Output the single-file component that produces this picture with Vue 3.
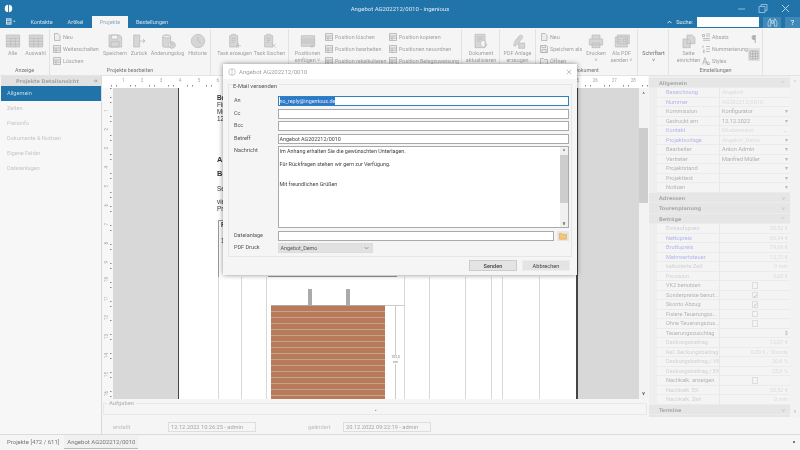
<template>
  <div class="app">
    <header class="titlebar">
      <svg class="logo" viewBox="0 0 12 12"><circle cx="6" cy="6" r="5" fill="#fff" /><path d="M6 0v12" stroke="#2174a9" stroke-width="1.2" /></svg>
      <span class="wintitle">Angebot AG202212/0010 - ingenious</span>
      <svg class="winbtn" viewBox="0 0 54 9"><path d="M0 5h7" stroke="#8fbad6" fill="none" /><path d="M21 2.500h6v6h-6zM23 2.500v-2h6v6h-2" stroke="#8fbad6" fill="none" /><path d="M44 1l7 7M51 1l-7 7" stroke="#b8d3e5" fill="none" /></svg>
    </header>
    <nav class="tabs">
      <svg class="menuicon" viewBox="0 0 14 8"><path d="M0 0h7v8H0z" fill="#dbe7f0" /><path d="M1 2h5M1 4h5M1 6h5" stroke="#2174a9" /><path d="M9 3h3l-1.500 2z" fill="#dbe7f0" /></svg>
      <span class="tab" style="width:35px;margin-left:7px">Kontakte</span>
      <span class="tab" style="width:33px">Artikel</span>
      <span class="tab active">Projekte</span>
      <span class="tab" style="width:48px">Bestellungen</span>
      <span class="spacer"></span>
      <svg class="chev" viewBox="0 0 6 4"><path d="M.5 3.500L3 1l2.500 2.500" fill="none" stroke="#fff" /></svg>
      <span class="search-label">Suche:</span>
      <span class="search"></span>
      <span class="helpbtn binoc">
        <svg viewBox="0 0 12 10"><path d="M1 9V5l2-4h1v8zM11 9V5L9 1H8v8zM5 3h2v3H5z" fill="none" stroke="#fff" stroke-width=".6" /></svg>
      </span>
      <span class="helpbtn last">?</span>
    </nav>

    <section class="ribbon">
      <div v-for="g in groups" :key="g.x" class="rgroup" :style="{ width: g.w + 'px' }">
        <div class="rbody" :style="{ paddingLeft: g.pad + 'px' }">
          <template v-for="(it, i) in g.items" :key="i">
            <div v-if="it.list" class="rlist" :style="{ width: it.w + 'px', marginLeft: (it.ml || 0) + 'px' }">
              <div v-for="s in it.list" :key="s" class="rsmall">
                <svg viewBox="0 0 8 8" class="sicon"><path :d="smallIcons[s] || smallIcons.list" fill="#ececec" stroke="#a9a9a9" stroke-width=".7" /></svg>
                <span>{{ s }}</span>
              </div>
            </div>
            <div v-else-if="it.extras" class="rextras">
              <span class="pilcrow">¶</span>
              <span class="gridbtn">
                <svg viewBox="0 0 10 10"><path d="M1 1h8v8H1zM1 3.700h8M1 6.300h8M3.700 1v8M6.300 1v8" fill="none" stroke="#a5a5a5" stroke-width=".7" /></svg>
              </span>
            </div>
            <div v-else class="rbig" :class="{ dark: it.dark }" :style="{ width: it.w + 'px' }">
              <svg viewBox="0 0 24 24" class="bicon"><path :d="icons[it.icon]" fill="#d6d6d6" stroke="#b8b8b8" stroke-width="1" /></svg>
              <span class="rtext">{{ it.t }}</span>
              <span v-if="it.t2" class="rtext">{{ it.t2 }}</span>
            </div>
          </template>
        </div>
        <div class="rlabel">{{ g.label }}</div>
      </div>
    </section>

    <main class="main">
      <aside class="side">
        <div class="side-head"><span>Projekte Detailansicht</span><em>«</em></div>
        <div class="side-item current">Allgemein</div>
        <div v-for="s in sideItems" :key="s" class="side-item">{{ s }}</div>
      </aside>

      <section class="center">
        <div class="ruler-h">
          <span v-for="n in 28" :key="n" class="rh">{{ n }}</span>
        </div>
        <div class="docarea">
          <div class="ruler-v">
            <span v-for="n in 16" :key="n" class="rv"><span>{{ n }}</span></span>
          </div>
          <div class="gray-l"></div>
          <div class="page">
            <div class="pagetext" style="top:6px"><b>Beispiel GmbH</b><br />Firma<br />Musterstr. 1<br />12345 Stadt</div>
            <div class="pagetext" style="top:68px"><b class="big">Angebot</b></div>
            <div class="pagetext" style="top:82px"><b class="big">Betreff</b></div>
            <div class="pagetext" style="top:97px">Sehr geehrte</div>
            <div class="pagetext" style="top:110px">vielen Dank<br />Preise</div>
            <div class="ptable"><b>P</b><span>1</span></div>
            <i v-for="x in pageLines" :key="x" class="vline" :style="{ left: x - 179 + 'px' }"></i>
            <i class="rowline"></i>
            <i class="post" style="left:129px"></i>
            <i class="post" style="left:167px"></i>
            <i class="dimtop"></i>
            <i class="dim"></i>
            <div class="dimtext">102,0<br />cm</div>
            <div class="panelrect"></div>
          </div>
          <div class="gray-r"></div>
          <div class="vscroll"><b>^</b><i></i><b class="down">v</b></div>
        </div>
        <div class="aufgaben"><span class="auf-legend">Aufgaben</span><span class="auf-dot">▴</span></div>
        <div class="stamps">
          <span class="st-label">erstellt</span>
          <span class="st-box">12.12.2022 10:26:25 - admin</span>
          <span class="st-label second">geändert</span>
          <span class="st-box">20.12.2022 09:22:19 - admin</span>
        </div>
      </section>

      <aside class="props">
        <div class="grid">
          <div class="sect">Allgemein<em>^</em></div>
          <div v-for="r in propsA" :key="r[0]" class="prow">
            <span class="pl" :class="r[2]">{{ r[0] }}</span>
            <span class="pv" :class="r[3]"><span>{{ r[1] }}</span><span v-if="r[4]" class="arrow">{{ r[4] }}</span></span>
          </div>
          <div class="sect">Adressen<em>v</em></div>
          <div class="sect">Tourenplanung<em>v</em></div>
          <div class="sect">Beträge<em>^</em></div>
          <div v-for="r in propsB" :key="r[0]" class="prow">
            <span class="pl" :class="r[2]">{{ r[0] }}</span>
            <span class="pv right" :class="r[3]">
              <i v-if="r[1] === 'box'" class="cb"></i>
              <i v-else-if="r[1] === 'tick'" class="cb">✓</i>
              <template v-else>{{ r[1] }}</template>
            </span>
          </div>
          <div class="sect">Termine<em>v</em></div>
          <div class="sect">Wiederbeschaffung<em>v</em></div>
        </div>
        <div class="pscroll"><b>^</b><b>v</b></div>
      </aside>
    </main>

    <footer class="foot">
      <span class="ftab">Projekte [472 / 611]</span>
      <span class="ftab on">Angebot AG202212/0010</span>
      <span class="spacer"></span>
      <i class="dot"></i>
    </footer>

    <div class="dialog">
      <div class="dlg-title">
        <svg viewBox="0 0 12 12" class="dlg-logo"><circle cx="6" cy="6" r="5" fill="none" stroke="#b5b5b5" /><path d="M6 1v10" stroke="#b5b5b5" /></svg>
        <span>Angebot AG202212/0010</span>
        <svg viewBox="0 0 8 8" class="dlg-x"><path d="M1 1l6 6M7 1l-6 6" stroke="#aaa" fill="none" /></svg>
      </div>
      <div class="dlg-body">
        <div class="fs">
          <span class="legend">E-Mail versenden</span>
          <div class="form">
            <label>An</label>
            <div class="inp focus"><span class="sel">no_reply@ingentous.de</span></div>
            <label>Cc</label>
            <div class="inp"></div>
            <label>Bcc</label>
            <div class="inp"></div>
            <label>Betreff</label>
            <div class="inp">Angebot AG202212/0010</div>
            <label>Nachricht</label>
            <div class="inp msg">
              <div class="msgtext">
                Im Anhang erhalten Sie die gewünschten Unterlagen.<br /><br />
                Für Rückfragen stehen wir gern zur Verfügung.<br /><br /><br />
                Mit freundlichen Grüßen
              </div>
              <div class="msgscroll"><b>^</b><i></i><b class="down">v</b></div>
            </div>
            <label>Dateianlage</label>
            <div class="filerow">
              <div class="inp"></div>
              <span class="folder">
                <svg viewBox="0 0 10 9"><path d="M.5 1.500h3l1 1h5v6h-9z" fill="#f6c675" stroke="#d99a3c" stroke-width=".6" /></svg>
              </span>
            </div>
            <label>PDF Druck</label>
            <div class="combo"><span>Angebot_Demo</span><svg viewBox="0 0 8 5"><path d="M1 1l3 3 3-3" fill="none" stroke="#555" stroke-width=".8" /></svg></div>
          </div>
        </div>
        <div class="dlg-btns">
          <span class="btn main-btn">Senden</span>
          <span class="btn">Abbrechen</span>
        </div>
      </div>
    </div>
  </div>
</template>

<script setup>
const icons = {
  table: "M2 3h20v18H2zM2 8h20M2 12.500h20M2 17h20M8.500 8v13M15.500 8v13",
  save: "M3 3h16l3 3v15H3zM7 3v6h9V3zM6 13h12v8H6z",
  door: "M4 3h9v18H4zM13 12h8M18 9l3 3-3 3",
  db: "M4 5c0-3 12-3 12 0v15c0 2-12 2-12 0zM4 5c0 3 12 3 12 0M18 13a5 5 0 1 0 .01 0zM18 15v3h2",
  clock: "M12 2a10 10 0 1 0 .01 0zM12 6v6l5 4",
  taskadd: "M4 4h3V2h6v2h3v17H4zM7 8h6M7 11h6M7 14h4M17 15v7M14 19h7",
  taskdel: "M4 4h3V2h6v2h3v17H4zM7 8h6M7 11h6M7 14h4M15 16l6 6M21 16l-6 6",
  rows: "M2 4h20v16H2zM2 9h20M2 12h20M2 15h20M18 17v6M15 20h6",
  docref: "M3 2h15v20H3zM6 6h9M6 9h9M6 12h5M19 12a5 5 0 1 0 2 5",
  clip: "M6 14l8-10a3 3 0 0 1 5 3L9 19a2 2 0 0 1-3-3l8-9M13 15h9v8h-9z",
  print: "M6 9V3h12v6M2 9h20v9H2zM6 15h12v7H6z",
  mail: "M5 3h18v13H5zM2 6h18v15H2zM5 10h6M5 13h6M14 9h4v4h-4z",
  page: "M9 3h8l4 4v9H9zM3 9h8l3 3v10H3z",
  none: "",
};

const smallIcons = {
  list: "M.5.500h7v7h-7zM.5 3h7M.5 5.200h7M3 3v4.500",
  Neu: "M1.500.500h3.500l2 2v5h-5.500z",
  Öffnen: "M.5 1.500h3l1 1h3v5h-7z",
  "Speichern als": "M.5.500h6l1 1v6h-7zM2 .5v2h3.500v-2M2 4.500h4v3H2z",
  Absatz: "M.5 1.500h2v2h-2zM4 1h4M4 3h4M1 5.500h7M1 7.300h7",
  Nummerierung: "M1 .5v2.500M1 5h1.500L1 7.300h2M4 1.500h4M4 4h4M4 6.500h4",
  Styles: "M.5 7.500L3 .5l2.500 7M1.500 5h3M5 7.500a1.500 1.500 0 1 1 2.500 0z",
};

const posA = ["Position löschen", "Position bearbeiten", "Position rekalkulieren"];
const posB = ["Position kopieren", "Positionen neuordnen", "Position Belegzuweisung"];

const groups = [
  { x: 0, w: 50, pad: 1, label: "Anzeige", items: [{ icon: "table", t: "Alle", w: 23 }, { icon: "table", t: "Auswahl", w: 23 }] },
  {
    x: 50, w: 161, pad: 3, label: "Projekte bearbeiten",
    items: [
      { list: ["Neu", "Weiterschalten", "Löschen"], w: 49 },
      { icon: "save", t: "Speichern", w: 26 },
      { icon: "door", t: "Zurück", w: 22 },
      { icon: "db", t: "Änderungslog", w: 35 },
      { icon: "clock", t: "Historie", w: 25 },
    ],
  },
  { x: 211, w: 78, pad: 5, label: "", items: [{ icon: "taskadd", t: "Task erzeugen", w: 37 }, { icon: "taskdel", t: "Task löschen", w: 33 }] },
  {
    x: 289, w: 173, pad: 5, label: "",
    items: [{ icon: "rows", t: "Positionen", t2: "einfügen ˅", w: 27 }, { list: posA, w: 64, ml: 4 }, { list: posB, w: 70 }],
  },
  { x: 462, w: 38, pad: 1, label: "", items: [{ icon: "docref", t: "Dokument", t2: "aktualisieren", w: 36 }] },
  { x: 500, w: 36, pad: 0, label: "", items: [{ icon: "clip", t: "PDF Anlage", t2: "erzeugen", w: 35 }] },
  {
    x: 536, w: 102, pad: 4, label: "Dokument",
    items: [
      { list: ["Neu", "Speichern als", "Öffnen"], w: 43 },
      { icon: "print", t: "Drucken", t2: "˅", w: 26 },
      { icon: "mail", t: "Als PDF", t2: "senden ˅", w: 25 },
    ],
  },
  { x: 638, w: 31, pad: 1, label: "", items: [{ icon: "none", t: "Schriftart", t2: "˅", w: 29, dark: true }] },
  {
    x: 669, w: 94, pad: 6, label: "Einstellungen",
    items: [{ icon: "page", t: "Seite", t2: "einrichten", w: 27 }, { list: ["Absatz", "Nummerierung", "Styles"], w: 46 }, { extras: true }],
  },
];

const sideItems = ["Zeiten", "Preisinfo", "Dokumente & Notizen", "Eigene Felder", "Dateianlagen"];
const pageLines = [218, 241, 266, 404, 429, 465, 491, 502, 539];

const propsA = [
  ["Bezeichnung", "Angebot", "link", "faint"],
  ["Nummer", "AG202212/0010", "link", "faint"],
  ["Kommission", "Konfigurator", "", "", "▾"],
  ["Gedruckt am", "12.12.2022", "", "", "▾"],
  ["Kontakt", "Mustermann", "link", "faint", "..."],
  ["Projektvorlage", "Angebot_Demo", "link", "faint", "▾"],
  ["Bearbeiter", "Anton Admin", "", "", "▾"],
  ["Vertreter", "Manfred Müller", "", "", "▾"],
  ["Projektstand", "", "", "", "▾"],
  ["Projekttext", "", "", "", "▾"],
  ["Notizen", "", "", "", "▾"],
];

const propsB = [
  ["Einkaufspreis", "50,52 €", "pale", "faint"],
  ["Nettopreis", "66,94 €", "link", "faint"],
  ["Bruttopreis", "79,66 €", "link", "faint"],
  ["Mehrwertsteuer", "12,72 €", "link", "faint"],
  ["kalkulierte Zeit", "0 min", "pale", "faint"],
  ["Provision", "0,00 €", "pale", "faint"],
  ["VK2 benutzen", "box", "", "mid"],
  ["Sonderpreise benut...", "tick", "", "mid"],
  ["Skonto Abzug", "tick", "", "mid"],
  ["Fixiere Teuerungsz...", "box", "", "mid"],
  ["Ohne Teuerungszus...", "box", "", "mid"],
  ["Teuerungszuschlag", "$", "", ""],
  ["Deckungsbeitrag", "12,07 €", "pale", "faint"],
  ["Rel. Deckungsbeitrag", "0,00 € / Stunde", "pale", "faint"],
  ["Deckungsbeitrag / VK", "20,6 %", "pale", "faint"],
  ["Deckungsbeitrag / EK", "25,9 %", "pale", "faint"],
  ["Nachkalk. anzeigen", "box", "", "mid"],
  ["Nachkalk. EK", "50,52 €", "pale", "faint"],
  ["Nachkalk. Zeit", "0 min", "pale", "faint"],
];
</script>

<style scoped>
.app,
.app * {
  box-sizing: border-box;
}

.app {
  position: relative;
  display: flex;
  flex-direction: column;
  width: 800px;
  height: 450px;
  overflow: hidden;
  background: #f5f5f5;
  font-family: Roboto, "Liberation Sans", sans-serif;
  font-size: 5.400px;
  color: #888;
  filter: blur(0.3px);
}

.spacer {
  flex: 1;
}

.titlebar {
  display: flex;
  align-items: center;
  height: 14px;
  flex: none;
  padding: 2px 0 0 4px;
  background: #2174a9;
}

.logo {
  width: 9px;
  height: 9px;
  flex: none;
}

.wintitle {
  flex: 1;
  padding-left: 49px;
  text-align: center;
  color: #dfeaf2;
  font-size: 6px;
}

.winbtn {
  width: 54px;
  height: 9px;
  flex: none;
  margin-right: 8px;
}

.tabs {
  display: flex;
  align-items: flex-end;
  height: 14px;
  flex: none;
  background: #2174a9;
  color: #cfe0ec;
  font-size: 5.600px;
}

.menuicon {
  width: 11px;
  height: 7px;
  margin: 0 0 3px 6px;
}

.tab {
  height: 12px;
  line-height: 12px;
  text-align: center;
}

.tab.active {
  width: 36px;
  background: #f5f5f5;
  color: #8aa9bf;
}

.chev {
  width: 5px;
  height: 4px;
  margin: 0 4px 4px 0;
}

.search-label {
  height: 12px;
  line-height: 12px;
  color: #dfeaf2;
  margin-right: 4px;
}

.search {
  width: 62px;
  height: 10px;
  margin: 0 4px 1px 0;
  background: #fff;
}

.helpbtn {
  width: 18px;
  height: 11px;
  margin-right: 4px;
  text-align: center;
  line-height: 11px;
  font-size: 8px;
  color: #fff;
  background: #3f88b7;
}

.helpbtn.last {
  width: 15px;
  margin-right: 0;
}

.binoc svg {
  width: 11px;
  height: 9px;
  margin-top: 1px;
}

.ribbon {
  display: flex;
  height: 48px;
  flex: none;
  background: #f5f5f5;
  border-bottom: 1px solid #e4e4e4;
}

.rgroup {
  display: flex;
  flex-direction: column;
  flex: none;
  height: 46px;
  margin-top: 1px;
  border-right: 1px solid #e2e2e2;
}

.rbody {
  display: flex;
  flex: 1;
  padding-top: 4px;
}

.rlabel {
  height: 10px;
  line-height: 10px;
  text-align: center;
  color: #777;
}

.rbig {
  display: flex;
  flex-direction: column;
  align-items: center;
  flex: none;
  color: #a2a2a2;
}

.rbig.dark {
  color: #6f6f6f;
}

.bicon {
  width: 16px;
  height: 16px;
  margin-bottom: 1px;
}

.rtext {
  line-height: 6.800px;
  white-space: nowrap;
}

.rlist {
  display: flex;
  flex-direction: column;
  flex: none;
  gap: 4px;
  color: #a2a2a2;
}

.rsmall {
  display: flex;
  align-items: center;
  gap: 2px;
  height: 8px;
  white-space: nowrap;
}

.sicon {
  width: 8px;
  height: 8px;
  flex: none;
}

.rextras {
  display: flex;
  flex-direction: column;
  align-items: center;
  flex: none;
  width: 12px;
}

.pilcrow {
  height: 15px;
  font-size: 11px;
  line-height: 13px;
  color: #b2b2b2;
}

.gridbtn {
  width: 12px;
  height: 13px;
  padding: 1.500px 1px;
  background: #e1e1e1;
}

.gridbtn svg {
  display: block;
  width: 10px;
  height: 10px;
}

.main {
  display: flex;
  flex: none;
  height: 358px;
}

.side {
  width: 102px;
  flex: none;
  border-right: 1px solid #dadada;
  background: #f7f7f7;
  padding-left: 1px;
}

.side-head {
  display: flex;
  justify-content: space-between;
  height: 10px;
  line-height: 10px;
  padding: 0 3px 0 15px;
  background: #e1e1e1;
  font-family: "DejaVu Sans", sans-serif;
  font-weight: bold;
  font-size: 5px;
  color: #a4a4a4;
}

.side-head em {
  font-style: normal;
  font-size: 7px;
}

.side-item {
  height: 15px;
  line-height: 15px;
  padding-left: 6px;
  font-size: 5.600px;
  color: #c6c6c6;
}

.side-item.current {
  background: #2174a9;
  color: #c7dae7;
}

.center {
  display: flex;
  flex-direction: column;
  flex: none;
  width: 546px;
}

.ruler-h {
  display: flex;
  height: 12px;
  flex: none;
  padding: 1px 0 0 3.500px;
  background: repeating-linear-gradient(90deg, #888 0 .5px, transparent .5px 4.740px) 0 9px / 100% 1.500px no-repeat #fff;
  overflow: hidden;
}

.rh {
  width: 18.950px;
  flex: none;
  text-align: right;
  font-size: 4.500px;
  line-height: 8px;
  color: #a5a5a5;
}

.docarea {
  display: flex;
  height: 311px;
  flex: none;
  background: #fff;
}

.ruler-v {
  display: flex;
  flex-direction: column;
  width: 11px;
  flex: none;
  padding-top: 5px;
  overflow: hidden;
  background: repeating-linear-gradient(180deg, #888 0 .5px, transparent .5px 4.740px) 8px 0 / 1.500px 100% no-repeat #f7f7f7;
}

.rv {
  height: 18.950px;
  flex: none;
  display: flex;
  align-items: flex-end;
  justify-content: center;
  padding-right: 3px;
  font-size: 4.500px;
  line-height: 5px;
  color: #a5a5a5;
}

.rv span {
  writing-mode: vertical-rl;
  transform: rotate(180deg);
}

.gray-l,
.gray-r {
  background: #d8d8d8;
  flex: none;
}

.gray-l {
  width: 66px;
  border-right: 1px solid #444;
}

.gray-r {
  width: 63px;
  border-left: 2px solid #444;
}

.page {
  position: relative;
  width: 397px;
  flex: none;
  overflow: hidden;
  background: #fff;
}

.pagetext {
  position: absolute;
  left: 38px;
  font-family: "Liberation Sans", sans-serif;
  font-size: 6.400px;
  line-height: 7px;
  color: #333;
  white-space: nowrap;
}

.pagetext .big {
  font-size: 7.500px;
}

.ptable {
  position: absolute;
  left: 39px;
  top: 132px;
  width: 120px;
  height: 57px;
  border: solid #999;
  border-width: 1px 0 0 1px;
  padding-left: 2px;
  font-family: "Liberation Sans", sans-serif;
  font-size: 6.400px;
  line-height: 8px;
  color: #333;
}

.ptable span {
  display: block;
  margin-top: 8px;
}

.vline {
  position: absolute;
  top: 189px;
  bottom: 0;
  width: 1px;
  background: #d8d8d8;
}

.rowline {
  position: absolute;
  left: 89px;
  top: 188px;
  width: 129px;
  height: 1px;
  background: #999;
}

.post {
  position: absolute;
  top: 201px;
  width: 4px;
  height: 16px;
  background: #aaa;
}

.panelrect {
  position: absolute;
  left: 92px;
  top: 217px;
  width: 114px;
  height: 94px;
  border-top: 1px solid #aaa;
  background: repeating-linear-gradient(180deg, #b87a58 0 5px, #c2a48f 5px 6px);
}

.dimtop {
  position: absolute;
  left: 206px;
  top: 217px;
  width: 19px;
  height: 1px;
  background: #ccc;
}

.dim {
  position: absolute;
  left: 216px;
  top: 217px;
  bottom: 0;
  width: 1px;
  background: #ccc;
}

.dimtext {
  position: absolute;
  left: 212px;
  top: 267px;
  width: 9px;
  background: #fff;
  text-align: center;
  font-size: 3.500px;
  line-height: 4.500px;
  color: #777;
}

.vscroll {
  display: flex;
  flex-direction: column;
  width: 9px;
  flex: none;
  background: #f3f3f3;
  padding: 3px 0;
}

.vscroll b,
.msgscroll b,
.pscroll b {
  text-align: center;
  font-size: 5px;
  line-height: 6px;
  color: #555;
}

.vscroll i {
  height: 75px;
  margin-top: 31px;
  background: #cdcdcd;
}

.vscroll .down {
  margin-top: auto;
}

.aufgaben {
  position: relative;
  height: 12px;
  margin: 4px 1px 0 1px;
  flex: none;
  border: 1px solid #e8e8e8;
}

.auf-legend {
  position: absolute;
  left: 3px;
  top: -4px;
  padding: 0 2px;
  background: #f5f5f5;
  color: #b8b8b8;
  font-size: 5.800px;
  font-weight: 500;
  line-height: 6px;
}

.auf-dot {
  position: absolute;
  left: 271px;
  top: 4px;
  font-size: 3px;
  color: #888;
}

.stamps {
  display: flex;
  align-items: center;
  height: 10px;
  margin-top: 7px;
  padding-left: 11px;
  font-size: 5.700px;
  color: #bdbdbd;
}

.st-label {
  width: 55px;
  flex: none;
}

.st-label.second {
  width: 35px;
  margin-left: 52px;
}

.st-box {
  width: 88px;
  height: 10px;
  flex: none;
  padding-left: 2px;
  line-height: 8px;
  border: 1px solid #dedede;
  color: #a5a5a5;
  white-space: nowrap;
}

.props {
  display: flex;
  align-items: flex-start;
  flex: 1;
  padding-left: 1px;
}

.grid {
  width: 141px;
  height: 341px;
  flex: none;
  padding-top: 1.500px;
  overflow: hidden;
  background: #eeeeee;
  font-size: 5.600px;
}

.sect {
  display: flex;
  justify-content: space-between;
  height: 10.500px;
  line-height: 10px;
  padding: 0 5px 0 10px;
  background: #e6e6e6;
  border-bottom: 1px solid #ececec;
  font-family: "DejaVu Sans", sans-serif;
  font-size: 5px;
  font-weight: bold;
  color: #aaa;
}

.sect em {
  font-style: normal;
  color: #ccc;
}

.prow {
  display: flex;
  height: 9.500px;
  margin-left: 8px;
  line-height: 9px;
  border-bottom: 1px solid #ebebeb;
  background: #f4f4f4;
  white-space: nowrap;
}

.pl {
  width: 63px;
  flex: none;
  padding-left: 9px;
  overflow: hidden;
  color: #b4b4b4;
  border-right: 1px solid #e8e8e8;
}

.pl.link {
  color: #b3b5ea;
}

.pl.pale {
  color: #d2d2d2;
}

.pv {
  display: flex;
  justify-content: space-between;
  flex: 1;
  padding: 0 2px;
  color: #b0b0b0;
}

.pv.faint {
  color: #dcdcdc;
}

.pv.right {
  justify-content: flex-end;
}

.pv.mid {
  justify-content: center;
}

.arrow {
  color: #b8b8b8;
}

.cb {
  display: inline-block;
  width: 6.500px;
  height: 6.500px;
  margin-top: 1px;
  border: 1px solid #ddd;
  font-style: normal;
  font-size: 6px;
  line-height: 5px;
  color: #b5b5b5;
}

.pscroll {
  display: flex;
  flex-direction: column;
  justify-content: space-between;
  width: 10px;
  height: 341px;
  flex: none;
  padding: 3px 0;
  background: #f2f2f2;
}

.pscroll b {
  color: #ccc;
}

.foot {
  display: flex;
  flex: 1;
  align-items: stretch;
  padding-left: 7px;
  border-top: 1px solid #dcdcdc;
  font-size: 6px;
  color: #777;
}

.ftab {
  line-height: 14px;
  margin-right: 5px;
  white-space: nowrap;
}

.ftab.on {
  width: 74px;
  height: 14px;
  margin-right: 0;
  text-align: center;
  background: #f0f0f0;
  border-bottom: 1px solid #bbb;
}

.dot {
  width: 2px;
  height: 2px;
  margin: 6px 5px 0 0;
  background: #777;
}

.dialog {
  position: absolute;
  left: 223px;
  top: 64px;
  width: 354px;
  height: 211px;
  background: #f5f5f5;
  box-shadow: 0 0 5px rgba(0, 0, 0, 0.45);
}

.dlg-title {
  display: flex;
  align-items: center;
  gap: 3px;
  height: 15px;
  padding: 0 5px;
  background: #fff;
  color: #a0a0a0;
  font-size: 6px;
}

.dlg-title span {
  flex: 1;
}

.dlg-logo {
  width: 8px;
  height: 8px;
}

.dlg-x {
  width: 6px;
  height: 6px;
}

.dlg-body {
  padding: 5px 5px 0;
}

.fs {
  position: relative;
  height: 173px;
  border: 1px solid #e6e6e6;
  padding: 11px 2px 0 5px;
}

.legend {
  position: absolute;
  left: 3px;
  top: -2px;
  padding: 0 1px;
  background: #f5f5f5;
  color: #555;
  font-size: 5.800px;
  line-height: 7px;
}

.form {
  display: grid;
  grid-template-columns: 43.500px 1fr;
  grid-template-rows: 10px 10px 10px 10px 82px 10px 10px;
  row-gap: 2.500px;
  color: #555;
}

.form label {
  line-height: 9px;
  font-size: 5.500px;
}

.inp {
  height: 10px;
  border: 1px solid #aaa;
  background: #fff;
  padding-left: 1px;
  line-height: 8px;
  color: #444;
}

.inp.focus {
  border-color: #2b83c4;
}

.sel {
  display: inline-block;
  height: 8px;
  background: #2f79c9;
  color: #dfe9f2;
}

.inp.msg {
  position: relative;
  height: 82px;
}

.msgtext {
  padding-top: 1px;
  line-height: 6.500px;
}

.msgscroll {
  position: absolute;
  top: 0;
  right: 0;
  bottom: 0;
  display: flex;
  flex-direction: column;
  width: 8px;
  background: #f0f0f0;
}

.msgscroll b {
  height: 8px;
  line-height: 8px;
}

.msgscroll i {
  height: 48px;
  background: #cdcdcd;
}

.msgscroll .down {
  margin-top: auto;
}

.filerow {
  display: flex;
  gap: 3px;
}

.filerow .inp {
  flex: 1;
}

.folder {
  width: 12px;
  height: 10px;
  background: #e6e6e6;
  text-align: center;
}

.folder svg {
  width: 8px;
  height: 8px;
  margin-top: 1px;
}

.combo {
  display: flex;
  align-items: center;
  justify-content: space-between;
  width: 95px;
  height: 10px;
  padding: 0 3px 0 2px;
  background: #e1e1e1;
  border: 1px solid #ddd;
}

.combo svg {
  width: 5px;
  height: 4px;
}

.dlg-btns {
  display: flex;
  justify-content: flex-end;
  gap: 5px;
  margin-top: 3px;
  padding-right: 2px;
  font-size: 5.600px;
}

.btn {
  width: 48px;
  height: 11px;
  line-height: 10px;
  text-align: center;
  background: #e4e4e4;
  border: 1px solid #ececec;
  color: #444;
}

.btn.main-btn {
  font-weight: 500;
  border-color: #ccc;
}
</style>

<style>
body {
  margin: 0;
}
</style>
